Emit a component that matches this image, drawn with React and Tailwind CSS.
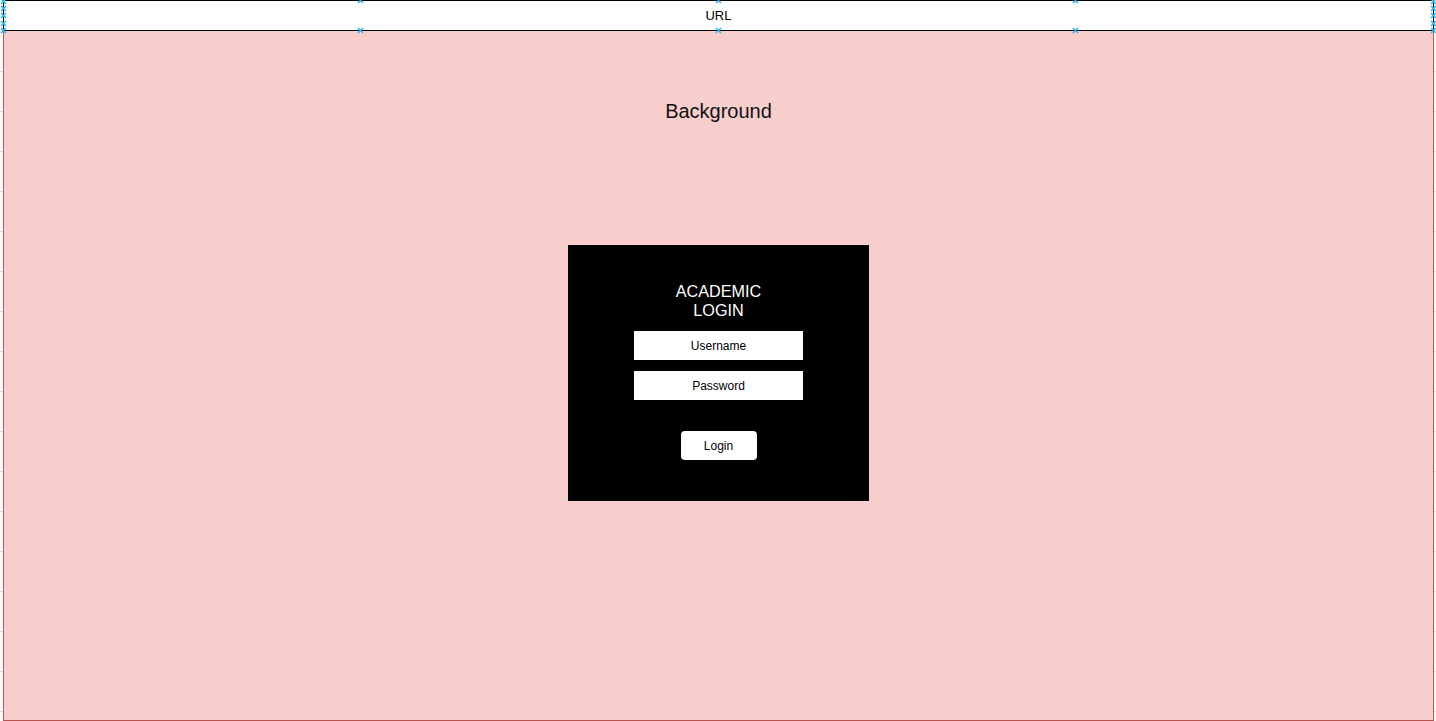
import React from "react";

function Cross({ x, y }) {
  return (
    <svg className="absolute w-[7px] h-[7px]" style={{ left: x - 3, top: y - 3 }} viewBox="0 0 7 7">
      <path d="M1 1L6 6M6 1L1 6" stroke="#29b6f2" strokeWidth="1.5" />
    </svg>
  );
}

export default function App() {
  const ticks = Array.from({ length: 18 }, (_, i) => 71 + i * 40);
  const sideYs = [1, 8, 15, 23, 30];
  return (
    <div
      className="relative w-[1436px] h-[721px] bg-white overflow-hidden flex"
      style={{ fontFamily: '"Liberation Sans", Arial, sans-serif' }}
    >
      {/* left ruler */}
      <div className="relative w-[3px] h-full">
        {ticks.map((y) => (
          <div key={y} className="absolute left-0 w-[3px] h-px bg-[#d9d9d9]" style={{ top: y }} />
        ))}
      </div>
      <div className="flex flex-col w-[1431px] h-full">
        {/* URL bar */}
        <div className="h-[31px] border border-black bg-white flex items-center justify-center text-[13px] text-black">
          URL
        </div>
        {/* Background */}
        <div className="flex-1 bg-[#f8cecc] border-x border-b border-[#b85450] flex flex-col items-center">
          <div className="mt-[69px] text-[20px] leading-[23px] text-[#111]">Background</div>
          <div className="mt-[122px] w-[301px] h-[256px] bg-black flex flex-col items-center">
            <div className="mt-[37px] text-white text-[16.2px] leading-[19px] text-center">
              ACADEMIC
              <br />
              LOGIN
            </div>
            <div className="mt-[11px] w-[169px] h-[29px] bg-white flex items-center justify-center text-[12px] text-black">
              Username
            </div>
            <div className="mt-[11px] w-[169px] h-[29px] bg-white flex items-center justify-center text-[12px] text-black">
              Password
            </div>
            <div className="mt-[31px] w-[76px] h-[29px] bg-white rounded-[4px] flex items-center justify-center text-[12px] text-black">
              Login
            </div>
          </div>
        </div>
      </div>
      {/* right ruler */}
      <div className="relative w-[2px] h-full">
        {ticks.map((y) => (
          <div key={y} className="absolute left-0 w-[2px] h-px bg-[#d9d9d9]" style={{ top: y }} />
        ))}
      </div>
      {/* selection handles */}
      {sideYs.map((y) => (
        <Cross key={"l" + y} x={3} y={y} />
      ))}
      {sideYs.map((y) => (
        <Cross key={"r" + y} x={1433} y={y} />
      ))}
      {[360, 718, 1075].map((x) =>
        [0, 30].map((y) => <Cross key={x + "-" + y} x={x} y={y} />)
      )}
    </div>
  );
}
